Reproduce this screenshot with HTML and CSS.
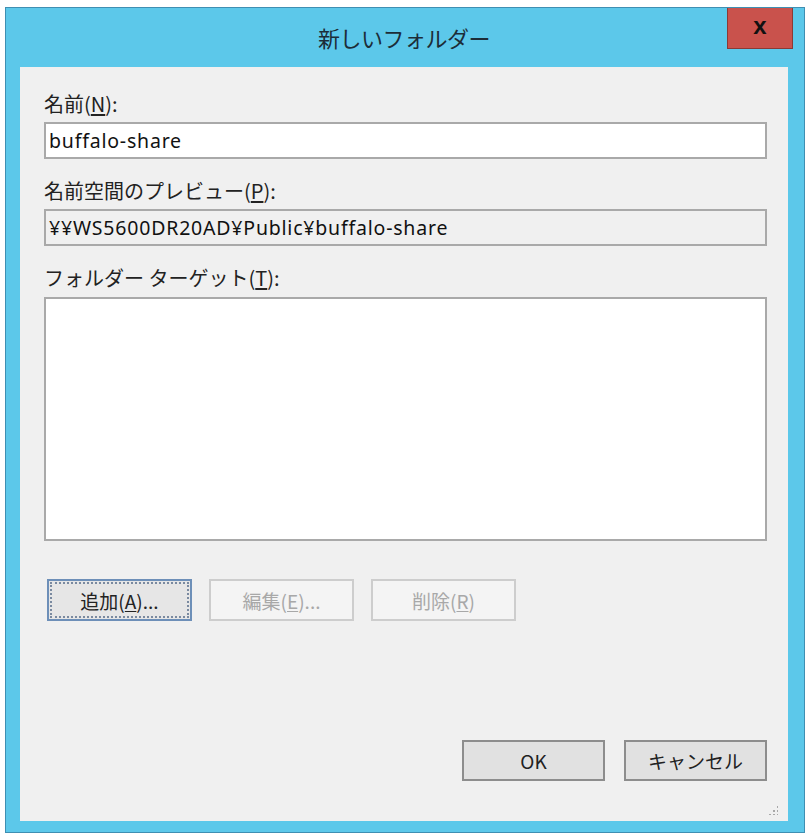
FILE: index.html
```html
<!DOCTYPE html>
<html lang="ja">
<head>
    <meta charset="UTF-8">
    <title>新しいフォルダー</title>
    <link rel="stylesheet" href="styles.css">
</head>
<body>
    <div class="window">
        <div class="titlebar">
            <span class="title">新しいフォルダー</span>
            <button class="close" type="button">x</button>
        </div>
        <div class="content">
            <label class="label" for="name">名前(<u>N</u>):</label>
            <input class="field" id="name" type="text" value="buffalo-share">

            <label class="label">名前空間のプレビュー(<u>P</u>):</label>
            <div class="field readonly">¥¥WS5600DR20AD¥Public¥buffalo-share</div>

            <label class="label">フォルダー ターゲット(<u>T</u>):</label>
            <div class="listbox"></div>

            <div class="row">
                <button class="btn focused" type="button"><span class="focus-ring">追加(<u>A</u>)...</span></button>
                <button class="btn" type="button" disabled>編集(<u>E</u>)...</button>
                <button class="btn" type="button" disabled>削除(<u>R</u>)</button>
            </div>

            <div class="footer">
                <button class="btn" type="button">OK</button>
                <button class="btn" type="button">キャンセル</button>
            </div>
            <div class="grip"></div>
        </div>
    </div>
</body>
</html>
```

FILE: styles.css
```css
body { margin: 0; background: #fff; font-family: "Noto Sans", "Noto Sans CJK JP", sans-serif; color: #1e1e1e; }

.window { margin: 7px 2px 0 5px; height: 826px; box-sizing: border-box; border: 1px solid #3f8fb2; background: #5cc8ea; padding: 0 16px 11px 14px; display: flex; flex-direction: column; }

.titlebar { height: 59px; flex: none; display: flex; align-items: center; justify-content: center; position: relative; }
.title { font-family: "Noto Sans CJK JP", sans-serif; font-size: 22px; color: #1c2d38; letter-spacing: -0.5px; margin-top: -2px; }
.close { position: absolute; top: 0; right: -5px; width: 66px; height: 41px; border: 1px solid #8a3a36; border-top: none; background: #c9524c; color: #111; font-family: "Liberation Sans", sans-serif; font-weight: bold; font-size: 24px; padding: 0 0 5px 0; }

.content { flex: 1; background: #f0f0f0; padding: 22px 21px 0 24px; display: flex; flex-direction: column; position: relative; }

.label { font-family: "Noto Sans CJK JP", sans-serif; font-size: 20px; line-height: 30px; color: #222; }
.label u, .btn u { text-underline-offset: 2px; }

.field { height: 37px; box-sizing: border-box; border: 2px solid #a9a9a9; background: #fff; font-family: "Noto Sans", "Noto Sans CJK JP", sans-serif; font-size: 19.5px; letter-spacing: 0.8px; padding: 0 3px; margin: 3px 0 17px; color: #111; display: flex; align-items: center; width: 100%; }
.field.readonly { background: #f0f0f0; margin-bottom: 17px; }

.listbox { height: 244px; box-sizing: border-box; border: 2px solid #a9a9a9; background: #fff; margin-top: 4px; }

.row { display: flex; gap: 17px; margin-top: 38px; padding-left: 3px; }
.btn { width: 145px; height: 42px; box-sizing: border-box; border: 2px solid #acacac; background: #e1e1e1; font-family: "Noto Sans CJK JP", sans-serif; font-size: 19px; color: #222; padding: 0; }
.btn:disabled { background: #f4f4f4; border-color: #cdcdcd; color: #a8a8a8; }
.btn.focused { border-color: #6d8fb8; background: #e6e6e6; padding: 1px; }
.focus-ring { display: flex; height: 100%; align-items: center; justify-content: center; border: 2px dotted #7a8aa0; box-sizing: border-box; }

.footer { display: flex; justify-content: flex-end; gap: 19px; margin-top: auto; margin-bottom: 40px; }
.footer .btn { width: 143px; height: 41px; border-color: #8d8d8d; }

.grip { position: absolute; right: 10px; bottom: 6px; width: 10px; height: 10px; background: radial-gradient(circle, #a8a8a8 1px, transparent 1.5px) 0 0 / 4px 4px; clip-path: polygon(100% 0, 100% 100%, 0 100%); }
```
